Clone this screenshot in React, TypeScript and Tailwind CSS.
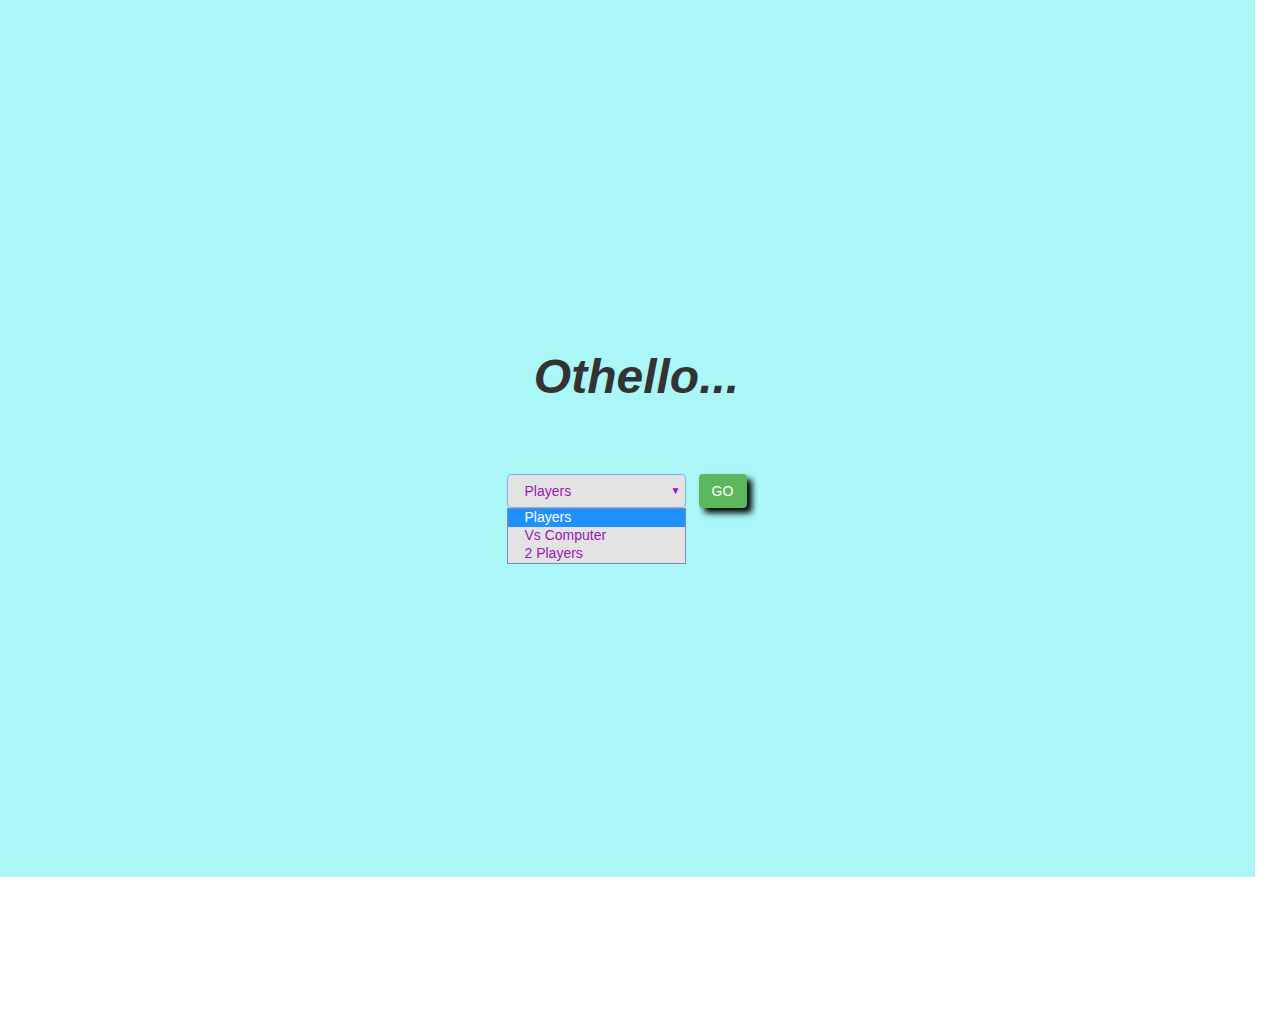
const options: Array<string> = ["Players", "Vs Computer", "2 Players"];

const App = () => {
  return (
    <div className="w-[1255px] h-[877px] bg-[#abf7f7] flex flex-col items-center font-['Liberation_Sans',Arial,sans-serif]">
      <h1 className="mt-[345px] pl-[18px] text-[48px] leading-[64px] font-bold italic text-[#333333]">
        Othello...
      </h1>
      <div className="mt-[65px] mr-[2px] flex items-start gap-[13px]">
        <div className="relative w-[179px]">
          <div className="h-[34px] flex items-center justify-between pl-[17px] pr-[4px] bg-[#e3e3e3] border border-[#80aef0] rounded-[4px] text-[14px] text-[#9a16b8]">
            <span>Players</span>
            <span className="text-[10px] leading-none">▼</span>
          </div>
          <ul className="absolute top-[34px] left-0 w-[179px] bg-[#e3e3e3] border border-[#7a88b8] text-[14px] leading-[17px]">
            {options.map((opt, index) => {
              return (
                <li
                  key={index}
                  className={
                    index === 0
                      ? "pl-[17px] h-[18px] bg-[#1e90ff] text-white"
                      : "pl-[17px] h-[18px] text-[#9a16b8]"
                  }
                >
                  {opt}
                </li>
              );
            })}
          </ul>
        </div>
        <button className="h-[34px] w-[48px] rounded-[4px] bg-[#5cb85c] text-white text-[14px] shadow-[5px_5px_6px_#000000]">
          GO
        </button>
      </div>
    </div>
  );
};

export default App;
